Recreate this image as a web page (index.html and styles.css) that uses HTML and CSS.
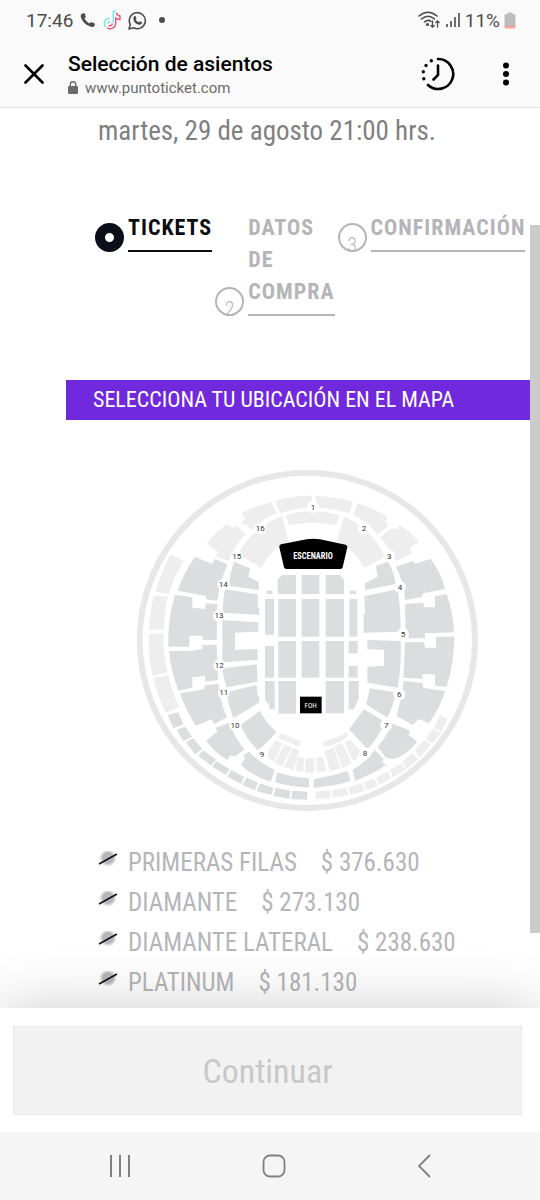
FILE: index.html
```html
<!DOCTYPE html>
<html lang="es">
<head>
    <meta charset="UTF-8">
    <meta name="viewport" content="width=device-width, initial-scale=1.0">
    <title>Selección de asientos</title>
    <link rel="stylesheet" href="styles.css">
</head>
<body>

    <div class="status-bar">
        <div class="status-left">
            <span>17:46</span>
            <svg width="16" height="16" viewBox="0 0 16 16"><path d="M1 2.5 3.2 1.2Q4.4 .8 4.9 2L5.7 4.4Q5.9 5.2 5.2 5.8L4.4 6.6Q6 9.8 9.3 11.5L10.3 10.6Q10.9 10 11.8 10.3L14.2 11.2Q15.2 11.8 14.8 13L14 14.6Q13.4 15.3 11 14.8 3.2 12.6 .8 5 .5 3.3 1 2.5Z" fill="#4d4d4d"/></svg>
            <svg width="18" height="20" viewBox="0 0 18 20" fill="none">
                <path d="M6.500 8.300Q1.200 8.800 1.200 13.300 1.200 15.500 2.800 17M10.300 12.500V1.200h2.500M7 11.500q-2 .5-2 2.200" stroke="#6fdfe6" stroke-width="1.300"/>
                <path d="M4 17.800Q6 19.300 8.500 18.600 12.700 17.300 12.700 13V8.200q2 1.300 4.300 1.300V6q-2.800-.3-3.700-3.200M5.500 15.500q3.500 1 3.800-2" stroke="#e8526f" stroke-width="1.400"/>
            </svg>
            <svg width="19" height="19" viewBox="0 0 19 19"><path d="M1 18 2.300 13.500A8 8 0 1 1 5.500 16.700Z" fill="none" stroke="#4d4d4d" stroke-width="1.600" stroke-linejoin="round"/><path d="M6.300 5 7.400 4.900 8.500 7.300 7.700 8.500Q8.700 10.500 10.900 11.300L12 10.200 14.100 11.300Q14.200 13.500 12 13.800 7.800 13.700 5.600 9.400 4.700 6.600 6.300 5Z" fill="#4d4d4d"/></svg>
            <i class="dot"></i>
        </div>
        <div class="status-right">
            <svg width="23" height="18" viewBox="0 0 23 18" fill="none" stroke="#4d4d4d" stroke-width="1.600" stroke-linecap="round">
                <path d="M1 5Q10-2.500 19 5M3.500 8Q10 2.500 16.500 8M6.500 11Q10 8 13 10.500"/>
                <circle cx="9.500" cy="13.500" r=".8" fill="#4d4d4d"/>
                <path d="M14.500 10v6M12.800 14.500l1.700 1.700 1.700-1.700M19.500 16v-6M17.800 11.500l1.700-1.700 1.700 1.700" stroke-width="1.300"/>
            </svg>
            <svg width="16" height="16" viewBox="0 0 16 16" stroke="#4d4d4d" stroke-width="1.600"><path d="M2 15v-3M6 15V9M10 15V5M14 15V1" /></svg>
            <span>11%</span>
            <svg width="12" height="17" viewBox="0 0 12 17"><path d="M3.500 2V1.500Q3.500 .5 4.500 .5h3q1 0 1 1V2h1.500q1.500 0 1.500 1.500V14H.5V3.500Q.5 2 2 2Z" fill="#bdbdbd"/><path d="M.5 13.500h11V15q0 1.500-1.500 1.500H2Q.5 16.500.5 15Z" fill="#f3a49b"/></svg>
        </div>
    </div>

    <header class="app-bar">
        <button class="icon-btn" aria-label="Cerrar">
            <svg width="20" height="20" viewBox="0 0 20 20"><path d="M1.500 1.500l17 17M18.500 1.500l-17 17" stroke="#000" stroke-width="2.600" stroke-linecap="round"/></svg>
        </button>
        <div class="page-info">
            <div class="page-title">Selección de asientos</div>
            <div class="page-url">
                <svg width="10" height="13" viewBox="0 0 10 13"><rect y="5" width="10" height="8" rx="1.200" fill="#6b6b6b"/><path d="M2.300 6V3.500a2.700 2.700 0 0 1 5.400 0V6" fill="none" stroke="#6b6b6b" stroke-width="1.400"/></svg>
                <span>www.puntoticket.com</span>
            </div>
        </div>
        <button class="icon-btn" aria-label="Historial">
            <svg width="34" height="34" viewBox="0 0 34 34" fill="none" stroke="#000" stroke-width="2.600" stroke-linecap="round" stroke-linejoin="round">
                <path d="M17 2a15 15 0 1 1-10 26M17 8.500V18l-4.500 4.500"/>
                <path d="M10.300 3.800v.01M5 8.500v.01M2.300 14.800v.01M2.800 21.800v.01" stroke-width="3.400"/>
            </svg>
        </button>
        <button class="icon-btn menu" aria-label="Menú">
            <svg width="6" height="24" viewBox="0 0 6 24"><circle cx="3" cy="3.500" r="3"/><circle cx="3" cy="12" r="3"/><circle cx="3" cy="20.500" r="3"/></svg>
        </button>
    </header>

    <main class="content">
        <p class="event-date">martes, 29 de agosto 21:00 hrs.</p>

        <ol class="steps">
            <li class="step active"><span class="step-icon"></span><span class="step-label">TICKETS</span></li>
            <li class="step"><span class="step-icon">2</span><span class="step-label">DATOS DE COMPRA</span></li>
            <li class="step"><span class="step-icon">3</span><span class="step-label">CONFIRMACIÓN</span></li>
        </ol>

        <h2 class="banner">SELECCIONA TU UBICACIÓN EN EL MAPA</h2>

        <svg class="map" viewBox="0 0 1080 1080" role="img" aria-label="Mapa de ubicaciones">
            <circle cx="532" cy="541" r="503" fill="none" stroke="#e7e7e7" stroke-width="18"/>

            <!-- upper tier and side strips -->
            <g fill="#eeeeef">
                <path d="M122 284 162 302Q130 350 117 402L77 396Q92 335 122 284Z"/>
                <path d="M70 407 113 410Q102 455 102 508L58 510Q60 455 70 407Z"/>
                <path d="M57 522 100 520Q98 580 112 637L68 647Q52 585 57 522Z"/>
                <path d="M70 655 115 645Q125 695 148 742L107 758Q83 710 70 655Z"/>
                <path d="M335 158Q375 138 425 126L440 160Q395 178 365 210L350 196 333 192 345 175Z"/>
                <path d="M230 250Q255 218 290 193L310 205 322 197 347 223Q310 262 296 303L258 290 265 275Z"/>
                <path d="M456 168 476 245 447 258Q415 280 395 325L325 282Q365 205 456 168Z"/>
                <path d="M437 122Q490 107 545 107V142Q495 145 450 160Z"/>
                <path d="M557 107Q615 110 668 125L658 160Q610 145 557 142Z"/>
                <path d="M468 166Q548 142 630 166L618 196Q548 180 477 196Z"/>
                <path d="M683 130Q732 145 773 170L765 182 775 198 742 224Q715 185 670 165Z"/>
                <path d="M642 170Q725 205 765 290L703 323Q675 270 620 243Z"/>
                <path d="M750 232 785 205 800 208 810 195Q840 215 867 245L840 265 845 282 797 303Q780 265 750 232Z"/>
                <path d="M452 820 512 843 508 860 445 835Z"/>
                <path d="M435 840 458 850 430 905 408 887Z"/>
                <path d="M463 853 485 862 457 920 432 908Z"/>
                <path d="M488 863 507 870 492 930 462 922Z"/>
                <path d="M503 890 523 895 520 937 497 932Z"/>
                <path d="M527 895 553 895 553 938 525 938Z"/>
                <path d="M558 893 577 890 590 933 561 938Z"/>
                <path d="M583 873 610 863 633 925 600 933Z"/>
                <path d="M613 860 637 848 665 910 637 923Z"/>
                <path d="M643 847 660 840 695 875 670 905Z"/>
                <path d="M577 845Q618 837 650 815L655 827Q622 855 583 862Z"/>
                <path d="M557 995 600 991 602 1014 557 1017Z"/>
                <path d="M605 990 650 983 655 1005 608 1013Z"/>
                <path d="M655 982 697 970 705 993 661 1004Z"/>
                <path d="M701 968 733 955 743 977 709 992Z"/>
                <path d="M738 953 773 933 783 955 747 975Z"/>
                <path d="M779 929 813 911 827 931 789 952Z"/>
                <path d="M817 905 847 878 865 897 830 927Z"/>
                <path d="M855 870 882 840 903 855 868 893Z"/>
                <path d="M887 835 910 807 933 820 907 851Z"/>
                <path d="M913 803 929 765 952 775 935 815Z"/>
            </g>

            <g fill="#dcdddf">
                <!-- outer ring, left -->
                <path d="M195 290 245 312 255 297 293 313Q270 360 262 422L228 418V408L143 392Q160 340 195 290Z"/>
                <path d="M135 405 187 412V443L225 447 227 430 262 433 260 540H218V527H178V560H115Q112 480 135 405Z"/>
                <path d="M117 573H180L217 567V555H260L264 660 225 665V647L187 652V683L145 692Q122 630 117 573Z"/>
                <path d="M150 700 222 688 225 675 266 672Q270 725 290 772L253 793 245 778 197 797Q167 750 150 700Z"/>
                <path d="M228 842 262 815 257 803 298 788Q315 835 343 868L315 890 302 885 292 900Q255 878 228 842Z"/>
                <path d="M332 915 345 895 340 885 357 875Q390 910 435 930L422 965Q370 950 332 915Z"/>
                <path d="M442 937Q490 953 537 955V983Q485 982 435 967Z"/>
                <path d="M113 765 145 757 160 793 130 805Z"/>
                <path d="M140 810 165 800 187 830 160 843Z"/>
                <path d="M168 847 190 835 217 867 195 883Z"/>
                <path d="M205 887 220 871 258 899 243 917Z"/>
                <path d="M247 920 258 903 298 927 287 945Z"/>
                <path d="M292 950 303 930 342 950 333 972Z"/>
                <path d="M337 975 350 953 384 968 375 991Z"/>
                <path d="M380 993 390 970 430 983 424 1005Z"/>
                <path d="M430 1007 437 983 482 992 478 1017Z"/>
                <path d="M484 1018 486 992 532 995 531 1019Z"/>
                <!-- outer ring, right -->
                <path d="M551 957Q600 950 652 933L662 963Q605 980 551 983Z"/>
                <path d="M667 930Q705 910 735 870L760 897 758 908 768 915Q725 945 675 962Z"/>
                <path d="M743 860Q775 825 785 790L840 812 836 825 862 845Q830 885 790 897L768 893Z"/>
                <path d="M800 768Q815 715 822 662L878 670 880 683 945 693Q930 745 897 790L865 777 848 795Z"/>
                <path d="M825 547H882L885 563H918V530H973Q972 610 950 680L915 677V643H877V657L820 653Z"/>
                <path d="M825 432 880 428 882 442H915V408L950 402Q970 460 972 517L885 520V535H827Z"/>
                <path d="M798 320 850 303 855 312 902 296Q935 340 945 387L880 400 875 412 825 420Q820 360 798 320Z"/>
                <!-- inner ring, left -->
                <path d="M312 305 360 325 355 350 385 365 387 390 298 378Q300 340 312 305Z"/>
                <path d="M285 388 383 403V440L388 445V465L278 458Q278 420 285 388Z"/>
                <path d="M277 480 385 487V515L315 518V570L383 567V600L277 607Z"/>
                <path d="M277 625 380 613 383 665 290 682Q280 655 277 625Z"/>
                <path d="M288 697 380 675 382 705 388 712V727L310 775Q295 735 288 697Z"/>
                <path d="M332 795 390 752Q405 785 440 817L385 872Q350 840 332 795Z"/>
                <!-- inner ring, right -->
                <path d="M737 318 775 305Q795 345 797 372L705 390V370L743 350Z"/>
                <path d="M703 408 803 388Q812 440 812 515L701 518V463L705 460Z"/>
                <path d="M712 540 812 543Q815 620 803 683L712 668V620L762 617V570L712 567Z"/>
                <path d="M720 685 797 697Q790 740 772 773L708 733 715 705Z"/>
                <path d="M702 748 765 785Q745 835 712 867L657 808Z"/>
                <!-- floor -->
                <path d="M443 358 456 345H498V402H443Z"/>
                <rect x="515" y="345" width="53" height="57"/>
                <path d="M587 345H629L642 358V402H587Z"/>
                <rect x="410" y="392" width="18" height="10"/>
                <rect x="660" y="392" width="18" height="10"/>
                <rect x="405" y="417" width="27" height="107"/>
                <rect x="445" y="417" width="53" height="113"/>
                <rect x="515" y="417" width="53" height="113"/>
                <rect x="587" y="417" width="55" height="113"/>
                <rect x="658" y="417" width="24" height="113"/>
                <rect x="405" y="558" width="27" height="95"/>
                <rect x="445" y="543" width="53" height="110"/>
                <rect x="515" y="543" width="53" height="110"/>
                <rect x="587" y="543" width="55" height="110"/>
                <rect x="656" y="543" width="27" height="37"/>
                <rect x="656" y="618" width="27" height="35"/>
                <path d="M405 663H434V748H418V735L405 720Z"/>
                <rect x="445" y="663" width="53" height="98"/>
                <rect x="587" y="663" width="55" height="97"/>
                <path d="M656 663H686V715L672 748H656Z"/>
            </g>

            <path d="M453 253 530 238Q550 235 570 238L647 254Q653 256 652 262L638 322Q637 327 631 327H469Q463 327 462 322L448 262Q447 255 453 253Z"/>
            <rect x="510" y="710" width="65" height="50"/>
            <text class="stage-text" x="549" y="296">ESCENARIO</text>
            <text class="foh-text" x="542" y="744">FOH</text>

            <g fill="#fff">
                <circle cx="549" cy="141" r="18"/><circle cx="702" cy="205" r="18"/>
                <circle cx="778" cy="289" r="18"/><circle cx="810" cy="381" r="18"/>
                <circle cx="819" cy="523" r="18"/><circle cx="808" cy="703" r="18"/>
                <circle cx="769" cy="795" r="18"/><circle cx="705" cy="880" r="18"/>
                <circle cx="396" cy="882" r="18"/><circle cx="315" cy="795" r="18"/>
                <circle cx="281" cy="698" r="18"/><circle cx="268" cy="616" r="18"/>
                <circle cx="267" cy="467" r="18"/><circle cx="280" cy="374" r="18"/>
                <circle cx="320" cy="289" r="18"/><circle cx="391" cy="205" r="18"/>
            </g>
            <g class="section-number">
                <text x="549" y="149">1</text><text x="702" y="213">2</text>
                <text x="778" y="297">3</text><text x="810" y="389">4</text>
                <text x="819" y="531">5</text><text x="808" y="711">6</text>
                <text x="769" y="803">7</text><text x="705" y="888">8</text>
                <text x="396" y="890">9</text><text x="315" y="803">10</text>
                <text x="281" y="706">11</text><text x="268" y="624">12</text>
                <text x="267" y="475">13</text><text x="280" y="382">14</text>
                <text x="320" y="297">15</text><text x="391" y="213">16</text>
            </g>
        </svg>

        <ul class="prices">
            <li><svg class="sold-out" viewBox="0 0 20 16"><circle cx="10" cy="7" r="7"/><path d="M1 13 19 3"/></svg><span>PRIMERAS FILAS</span><span>$ 376.630</span></li>
            <li><svg class="sold-out" viewBox="0 0 20 16"><circle cx="10" cy="7" r="7"/><path d="M1 13 19 3"/></svg><span>DIAMANTE</span><span>$ 273.130</span></li>
            <li><svg class="sold-out" viewBox="0 0 20 16"><circle cx="10" cy="7" r="7"/><path d="M1 13 19 3"/></svg><span>DIAMANTE LATERAL</span><span>$ 238.630</span></li>
            <li><svg class="sold-out" viewBox="0 0 20 16"><circle cx="10" cy="7" r="7"/><path d="M1 13 19 3"/></svg><span>PLATINUM</span><span>$ 181.130</span></li>
        </ul>
        <div class="scroll-thumb"></div>
    </main>

    <div class="checkout">
        <button class="btn" disabled>Continuar</button>
    </div>

    <nav class="nav-bar">
        <button class="icon-btn" aria-label="Recientes">
            <svg width="22" height="22" viewBox="0 0 22 22"><path d="M2 0v22M11 0v22M20 0v22" stroke="#808080" stroke-width="2"/></svg>
        </button>
        <button class="icon-btn" aria-label="Inicio">
            <svg width="24" height="24" viewBox="0 0 24 24"><rect x="1.500" y="1.500" width="21" height="21" rx="6.500" fill="none" stroke="#808080" stroke-width="1.800"/></svg>
        </button>
        <button class="icon-btn" aria-label="Atrás">
            <svg width="14" height="24" viewBox="0 0 14 24"><path d="M12.500 1.500 2 12l10.500 10.500" fill="none" stroke="#808080" stroke-width="1.800" stroke-linecap="round"/></svg>
        </button>
    </nav>

</body>
</html>
```

FILE: styles.css
```css
* {
    box-sizing: border-box;
}
body {
    margin: 0;
    height: 100vh;
    display: flex;
    flex-direction: column;
    background: #fff;
    font-family: "Roboto Condensed", Roboto, sans-serif;
}
button {
    font-family: inherit;
}
svg {
    display: block;
    flex: none;
}
.status-bar {
    height: 40px;
    padding: 0 24px 0 26px;
    display: flex;
    align-items: center;
    justify-content: space-between;
    background: #fafafa;
    font-family: Roboto, sans-serif;
    font-size: 19px;
    color: #4d4d4d;
}
.status-left {
    display: flex;
    align-items: center;
    gap: 7px;
}
.status-right {
    display: flex;
    align-items: center;
    gap: 4px;
}
.dot {
    width: 6px;
    height: 6px;
    margin-left: 5px;
    border-radius: 50%;
    background: #4d4d4d;
}
.app-bar {
    height: 68px;
    padding: 0 31px 0 24px;
    display: flex;
    align-items: center;
    background: #fafafa;
    border-bottom: 1px solid #e4e4e4;
    font-family: Roboto, sans-serif;
}
.icon-btn {
    padding: 0;
    border: none;
    background: none;
    cursor: pointer;
}
.page-info {
    flex: 1;
    margin-left: 24px;
}
.page-title {
    font-size: 21px;
    line-height: 28px;
    font-weight: 500;
    color: #000;
}
.page-url {
    display: flex;
    align-items: center;
    gap: 7px;
    font-size: 15px;
    line-height: 20px;
    color: #6b6b6b;
}
.menu {
    margin-left: 48px;
}
.content {
    position: relative;
    flex: 1;
    min-height: 0;
    overflow: hidden;
    padding: 7px 15px 0 95px;
}
.event-date {
    margin: 0 0 65px 3px;
    font-size: 27px;
    line-height: 32px;
    color: #808080;
}
.steps {
    display: flex;
    align-items: flex-start;
    gap: 3px;
    margin: 0 0 64px;
    padding: 0;
    list-style: none;
}
.step {
    display: flex;
    align-items: flex-end;
    gap: 4px;
    color: #b5b5b9;
}
.step-icon {
    flex: none;
    width: 29px;
    height: 29px;
    padding-top: 8px;
    border: 2px solid #b5b5b9;
    border-radius: 50%;
    font-size: 20px;
    line-height: 24px;
    font-weight: 300;
    text-align: center;
}
.step-label {
    width: min-content;
    padding-bottom: 6px;
    border-bottom: 2px solid #b5b5b9;
    font-size: 22px;
    line-height: 32px;
    font-weight: 700;
    letter-spacing: 1px;
}
.active {
    color: #0a0c10;
}
.active .step-icon {
    border: 10px solid #0a0f19;
    padding: 0;
}
.active .step-label {
    border-color: #0a0c10;
}
.banner {
    margin: 0 -6px 40px -29px;
    padding: 0 27px;
    background: #7029dc;
    color: #fff;
    font-size: 22px;
    line-height: 40px;
    font-weight: 400;
}
.map {
    width: 100%;
    max-width: 360px;
    margin: 0 auto 23px;
}
.section-number {
    font-family: Roboto, sans-serif;
    font-size: 24px;
    text-anchor: middle;
    fill: #333;
}
.stage-text {
    font-size: 25px;
    font-weight: 700;
    text-anchor: middle;
    fill: #fff;
}
.foh-text {
    font-size: 22px;
    text-anchor: middle;
    fill: #fff;
}
.prices {
    margin: 0;
    padding: 0 0 0 3px;
    list-style: none;
    font-size: 25px;
    line-height: 40px;
    color: #b5b5b9;
}
.prices li {
    display: flex;
    gap: 24px;
}
.sold-out {
    width: 20px;
    height: 16px;
    margin: 8px -14px 0 0;
}
.sold-out circle {
    fill: #b5b5bb;
    stroke: #dcdcdf;
    stroke-width: 2;
}
.sold-out path {
    stroke: #111;
    stroke-width: 1.5;
}
.scroll-thumb {
    position: absolute;
    top: 117px;
    right: 0;
    width: 10px;
    height: 708px;
    background: #cbcbcb;
}
.checkout {
    position: relative;
    padding: 18px 18px 17px 13px;
    background: #fff;
    box-shadow: 0 0 60px rgba(0, 0, 0, 0.2);
}
.btn {
    display: block;
    width: 100%;
    height: 89px;
    border: 1px solid #e8e8e8;
    background: #f2f2f2;
    color: #c8c8c8;
    font-size: 34px;
}
.nav-bar {
    position: relative;
    height: 68px;
    padding: 0 109px;
    display: flex;
    align-items: center;
    justify-content: space-between;
    background: #f5f5f5;
}
```
